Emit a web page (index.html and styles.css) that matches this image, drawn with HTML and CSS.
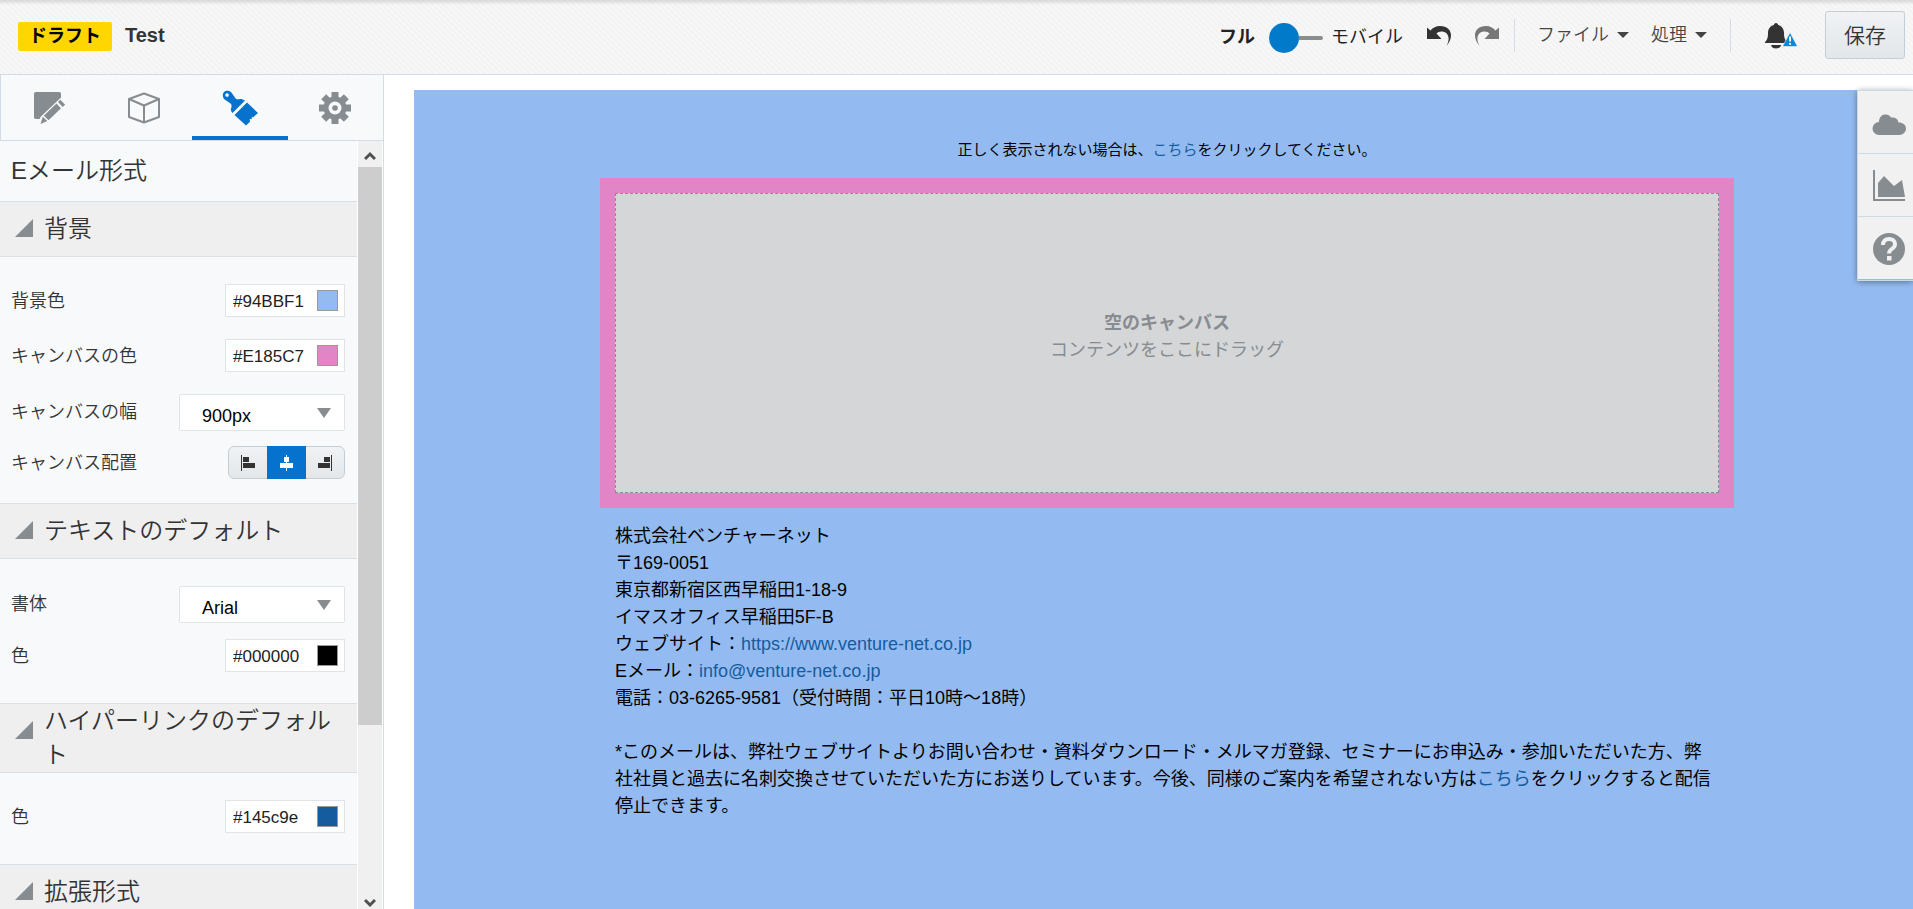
FILE: index.html
```html
<!DOCTYPE html>
<html lang="ja">
<head>
<meta charset="utf-8">
<title>Test</title>
<link rel="stylesheet" href="styles.css">
</head>
<body>
<div class="app">
  <header class="topbar">
    <span class="badge">ドラフト</span>
    <h1 class="doc-title">Test</h1>
    <div class="view-switch">
      <span class="view-full">フル</span>
      <button class="toggle" type="button" role="switch" aria-checked="false" aria-label="表示切替"><span class="knob"></span><span class="track"></span></button>
      <span>モバイル</span>
    </div>
    <div class="history">
      <button class="icon-btn" type="button" aria-label="元に戻す">
        <svg width="26" height="22" viewBox="0 0 26 22"><path fill="#333" d="M1 2.500l3.500 3C7 2.500 10 1 14 1c7 0 11 4 11 9.500 0 4-2 7-4.500 10.500 1.500-3 2.500-6 2-8.500C22 8.500 19 6.500 15.500 6.500c-2 0-4 .8-5 2L15.500 14H1z"/></svg>
      </button>
      <button class="icon-btn" type="button" aria-label="やり直す">
        <svg width="26" height="22" viewBox="0 0 26 22"><path fill="#777" d="M25 2.500l-3.500 3C19 2.500 16 1 12 1 5 1 1 5 1 10.500c0 4 2 7 4.500 10.500-1.500-3-2.500-6-2-8.500C4 8.500 7 6.500 10.500 6.500c2 0 4 .8 5 2L10.500 14H25z"/></svg>
      </button>
    </div>
    <nav class="menus">
      <button class="menu-btn" type="button">ファイル<span class="caret"></span></button>
      <button class="menu-btn" type="button">処理<span class="caret"></span></button>
    </nav>
    <button class="bell" type="button" aria-label="通知">
      <svg width="34" height="28" viewBox="0 0 34 28">
        <path fill="#333" d="M12 1c1.300 0 2 1 2.200 2C18 4 20 7 20 11c0 5 1 7 3 9v1H1v-1c2-2 3-4 3-9 0-4 2-7 5.800-8C10 2 10.700 1 12 1z"/>
        <path fill="#333" d="M7 23h10c-.5 2.500-2.500 3.500-5 3.500S7.500 25.500 7 23z"/>
        <path fill="#0b87d5" stroke="#f5f5f5" stroke-width=".6" d="M26 10.500L33.500 24.500h-15z"/>
        <path fill="#fff" d="M25.200 14.500h1.800v5h-1.800zM25.200 21h1.800v1.800h-1.800z"/>
      </svg>
    </button>
    <button class="save" type="button">保存</button>
  </header>

  <aside class="sidebar">
    <div class="tabs" role="tablist">
      <button class="tab" role="tab" type="button" aria-label="編集">
        <svg width="32" height="34" viewBox="0 0 32 34"><path fill="#878c90" d="M3 1h23c1.500 0 2 .7 2 2v3.500L8 25.500 6.500 28H3c-1.500 0-2-.8-2-2V3c0-1.300.7-2 2-2z"/><path fill="#878c90" d="M23.500 12.500l4.500 4.700-12.500 12-4.700-4.500zM25 11l2.200-2.200 5 4.800-2.500 2.400zM9.800 25.800l4.400 4.200L7.500 33z"/></svg>
      </button>
      <button class="tab" role="tab" type="button" aria-label="コンポーネント">
        <svg width="34" height="32" viewBox="0 0 34 32" fill="none" stroke="#878c90" stroke-width="2" stroke-linejoin="round"><path d="M17 1.500L32 7v18l-15 5.500L2 25V7z"/><path d="M2 7l15 6.500L32 7M17 13.500v17"/></svg>
      </button>
      <button class="tab tab-active" role="tab" type="button" aria-selected="true" aria-label="スタイル">
        <svg width="36" height="36" viewBox="0 0 36 36"><path fill="#0572ce" fill-rule="evenodd" d="M2 2c2-2 5-1.500 7 0l5 7c1.500.8 3.500-.5 5.500 0L23 10.500 10.500 23C8.500 21 8.500 19 9.500 17c.3-1.500 0-2.500-1-3.500L2 9C.5 6.500.3 4 2 2zM5 3.200a1.800 1.800 0 1 0 .1 0z"/><path fill="#0572ce" d="M25 12.500L36 23l-5 4.500-1-1-.3 2.700-2-.5.3 3-4 3.800L12.500 25z"/></svg>
      </button>
      <button class="tab" role="tab" type="button" aria-label="設定">
        <svg width="34" height="34" viewBox="-17 -17 34 34"><g fill="#878c90"><rect x="-3.500" y="-16" width="7" height="32"/><rect x="-3.500" y="-16" width="7" height="32" transform="rotate(45)"/><rect x="-3.500" y="-16" width="7" height="32" transform="rotate(90)"/><rect x="-3.500" y="-16" width="7" height="32" transform="rotate(135)"/><circle r="11.500"/></g><circle r="6.500" fill="#f7f9fb"/><circle r="2.800" fill="#878c90"/></svg>
      </button>
    </div>
    <div class="sidebar-body">
      <div class="panel">
        <h2 class="panel-title">Eメール形式</h2>

        <section class="group">
          <h3 class="group-head"><span class="disclosure"></span><span class="group-name">背景</span></h3>
          <div class="fields">
            <div class="field">
              <label class="field-name" for="bg">背景色</label>
              <span class="color-box"><input id="bg" class="hex" type="text" value="#94BBF1"><button class="swatch swatch-bg" type="button" aria-label="背景色を選択"></button></span>
            </div>
            <div class="field">
              <label class="field-name" for="cv">キャンバスの色</label>
              <span class="color-box"><input id="cv" class="hex" type="text" value="#E185C7"><button class="swatch swatch-canvas" type="button" aria-label="キャンバスの色を選択"></button></span>
            </div>
            <div class="field">
              <label class="select-name" for="cw">キャンバスの幅</label>
              <span class="select-box"><select id="cw" class="select"><option>900px</option></select></span>
            </div>
            <div class="field field-align">
              <span class="field-name" id="al">キャンバス配置</span>
              <span class="segments" role="group" aria-labelledby="al">
                <button class="segment" type="button" aria-label="左揃え"><svg width="16" height="16" viewBox="0 0 16 16" fill="#333"><path d="M1 0h1v16H1zM3 2h6v5H3zM3 8h12v5H3z"/></svg></button>
                <button class="segment segment-on" type="button" aria-label="中央揃え"><svg width="16" height="16" viewBox="0 0 16 16" fill="#fff"><path d="M8 0h1v16H8zM6 2h5v5H6zM2 8h13v5H2z"/></svg></button>
                <button class="segment" type="button" aria-label="右揃え"><svg width="16" height="16" viewBox="0 0 16 16" fill="#333"><path d="M14 0h1v16h-1zM7 2h6v5H7zM1 8h12v5H1z"/></svg></button>
              </span>
            </div>
          </div>
        </section>

        <section class="group">
          <h3 class="group-head"><span class="disclosure"></span><span class="group-name">テキストのデフォルト</span></h3>
          <div class="fields">
            <div class="field">
              <label class="select-name" for="ff">書体</label>
              <span class="select-box"><select id="ff" class="select"><option>Arial</option></select></span>
            </div>
            <div class="field field-near">
              <label class="field-name" for="tc">色</label>
              <span class="color-box"><input id="tc" class="hex" type="text" value="#000000"><button class="swatch swatch-text" type="button" aria-label="文字色を選択"></button></span>
            </div>
          </div>
        </section>

        <section class="group">
          <h3 class="group-head"><span class="disclosure"></span><span class="group-name">ハイパーリンクのデフォルト</span></h3>
          <div class="fields">
            <div class="field">
              <label class="field-name" for="lc">色</label>
              <span class="color-box"><input id="lc" class="hex" type="text" value="#145c9e"><button class="swatch swatch-link" type="button" aria-label="リンク色を選択"></button></span>
            </div>
          </div>
        </section>

        <section class="group">
          <h3 class="group-head"><span class="disclosure"></span><span class="group-name">拡張形式</span></h3>
        </section>
      </div>
      <div class="scrollbar" aria-hidden="true">
        <span class="scroll-end"><svg width="12" height="10" viewBox="0 0 12 10"><path fill="none" stroke="#505050" stroke-width="3" d="M1 8l5-5 5 5"/></svg></span>
        <span class="scroll-track"><span class="scroll-thumb"></span></span>
        <span class="scroll-end scroll-down"><svg width="12" height="10" viewBox="0 0 12 10"><path fill="none" stroke="#505050" stroke-width="3" d="M1 2l5 5 5-5"/></svg></span>
      </div>
    </div>
  </aside>

  <main class="stage">
    <div class="mail">
      <p class="preheader">正しく表示されない場合は、<a href="#">こちら</a>をクリックしてください。</p>
      <div class="canvas">
        <div class="dropzone">
          <strong>空のキャンバス</strong>
          <span>コンテンツをここにドラッグ</span>
        </div>
      </div>
      <div class="footer">
        <p>株式会社ベンチャーネット<br>〒169-0051<br>東京都新宿区西早稲田1‐18‐9<br>イマスオフィス早稲田5F-B<br>ウェブサイト：<a href="#">https://www.venture-net.co.jp</a><br>Eメール：<a href="#">info@venture-net.co.jp</a><br>電話：03-6265-9581（受付時間：平日10時～18時）</p>
        <p>*このメールは、弊社ウェブサイトよりお問い合わせ・資料ダウンロード・メルマガ登録、セミナーにお申込み・参加いただいた方、弊社社員と過去に名刺交換させていただいた方にお送りしています。今後、同様のご案内を希望されない方は<a href="#">こちら</a>をクリックすると配信停止できます。</p>
      </div>
    </div>
    <nav class="dock">
      <button class="dock-btn" type="button" aria-label="クラウド"><svg width="34" height="34" viewBox="0 0 34 34"><path fill="#878c90" d="M7 29a6.500 6.500 0 0 1 0-13C7 11 10 8.500 13.500 8.500c2.500 0 4.500 1 5.500 3 4-.5 7 1.500 7.500 5C31 16.500 34 19 34 22.500S31 29 27.500 29z"/></svg></button>
      <button class="dock-btn" type="button" aria-label="レポート"><svg width="34" height="34" viewBox="0 0 34 34"><path fill="#878c90" d="M1 1h2v29h30v2H1zM6 28V14l6-7 10 10 8-6 3 17z"/></svg></button>
      <button class="dock-btn" type="button" aria-label="ヘルプ"><svg width="34" height="34" viewBox="0 0 34 34"><circle cx="17" cy="17" r="16" fill="#878c90"/><path d="M11 13c0-4 2.500-6 6-6s6 2 6 5.200c0 4.800-6 4.300-6 9.300" fill="none" stroke="#f1f1f1" stroke-width="4"/><rect x="15" y="24" width="4.500" height="4.500" fill="#f1f1f1"/></svg></button>
    </nav>
  </main>
</div>
</body>
</html>
```
FILE: styles.css
```css
* { box-sizing: border-box; }

body {
  margin: 0;
  font-family: "Liberation Sans", "Noto Sans CJK JP", sans-serif;
  font-size: 18px;
  font-weight: 350;
  line-height: 27px;
  color: #333;
  background: #fff;
}

h1, h2, h3, p { margin: 0; font-weight: inherit; }

button {
  font: inherit;
  color: inherit;
  background: none;
  border: 0;
  padding: 0;
}

svg { display: block; }

a { color: #145c9e; text-decoration: none; }

.app {
  display: grid;
  grid-template-columns: 384px minmax(0, 1fr);
  grid-template-rows: 75px minmax(0, 1fr);
  height: 100vh;
  overflow: hidden;
}

/* Top bar */
.topbar {
  grid-column: 1 / -1;
  display: flex;
  align-items: center;
  padding: 0 8px 4px 18px;
  border-bottom: 1px solid #d3dce6;
  background:
    linear-gradient(rgba(0, 0, 0, .12), transparent 5px),
    repeating-linear-gradient(45deg, #f7f7f7 0 2px, #f3f3f3 2px 4px);
}

.badge {
  margin-top: 2px;
  padding: 1px 11px;
  border-radius: 2px;
  background: #ffd600;
  color: #000;
  font-weight: 700;
}

.doc-title { margin-left: 13px; font-size: 20px; font-weight: 700; }

.view-switch {
  display: flex;
  align-items: center;
  margin: 5px 0 0 auto;
  color: #222;
  font-weight: 400;
}

.view-full { font-weight: 700; }

.toggle { display: flex; align-items: center; margin: 0 8px 0 14px; }
.knob { width: 30px; height: 30px; border-radius: 50%; background: #007ac9; }
.track { width: 24px; height: 4px; border-radius: 0 2px 2px 0; background: #888d90; }

.history { display: flex; gap: 22px; padding: 2px 14px 0 23px; }

.menus {
  display: flex;
  align-items: center;
  gap: 22px;
  height: 33px;
  padding: 0 23px 0 22px;
  border: solid #d3dce6;
  border-width: 0 1px;
  color: #444;
}

.menu-btn { display: flex; align-items: center; gap: 8px; }
.caret { border: solid transparent; border-width: 6px 6px 0; border-top-color: #444; }

.bell { padding: 2px 27px 0 33px; }

.save {
  width: 80px;
  height: 48px;
  border: 1px solid #c4ced7;
  border-radius: 3px;
  background: linear-gradient(#f0f2f4, #e3e7ea);
  font-size: 21px;
}

/* Sidebar */
.sidebar {
  display: grid;
  grid-template-rows: 66px minmax(0, 1fr);
  border-right: 1px solid #d3dce6;
  background: #f7f9fb;
}

.tabs {
  display: grid;
  grid-template-columns: repeat(4, 1fr);
  border-bottom: 1px solid #d3dce6;
  border-left: 1px solid #d3dce6;
}

.tab {
  display: flex;
  align-items: center;
  justify-content: center;
  border: solid transparent;
  border-width: 4px 0;
}
.tab-active { border-bottom-color: #0572ce; }

.sidebar-body {
  display: grid;
  grid-template-columns: minmax(0, 1fr) 25px;
  overflow: hidden;
}

.panel { overflow: hidden; border-right: 1px solid #fff; }

.panel-title { padding: 13px 11px; font-size: 24px; line-height: 34px; }

.group-head {
  display: flex;
  align-items: center;
  gap: 11px;
  min-height: 56px;
  padding: 0 12px 0 15px;
  border: solid #d9e0e6;
  border-width: 1px 0;
  background: #efefef;
  font-size: 24px;
  line-height: 34px;
}

.disclosure {
  flex: none;
  align-self: flex-start;
  width: 18px;
  height: 18px;
  margin-top: 17px;
  background: #878c90;
  clip-path: polygon(100% 0, 100% 100%, 0 100%);
}

.fields {
  display: flex;
  flex-direction: column;
  gap: 22px;
  padding: 27px 12px 31px 11px;
}

.field { display: flex; align-items: center; justify-content: space-between; }
.field-name { padding-top: 2px; }
.field-align { margin: -7px 0; }
.field-near { margin-top: -6px; }

.color-box {
  display: flex;
  align-items: center;
  width: 120px;
  height: 33px;
  padding: 0 6px 0 7px;
  border: 1px solid #dfe4e7;
  background: #fff;
}

.hex {
  flex: 1;
  min-width: 0;
  padding: 2px 0 0;
  border: 0;
  background: none;
  font: 17px "Liberation Sans", sans-serif;
  color: #222;
}

.swatch { width: 21px; height: 21px; border: 1px solid #999; }
.swatch-bg { background: #94bbf1; }
.swatch-canvas { background: #e185c7; }
.swatch-text { background: #000; }
.swatch-link { background: #145c9e; }

.select-box {
  display: grid;
  width: 166px;
  height: 37px;
  border: 1px solid #dfe4e7;
  border-radius: 2px;
  background: #fff;
}

.select-box::after {
  content: "";
  grid-area: 1 / 1;
  place-self: center end;
  margin-right: 13px;
  border: solid transparent;
  border-width: 10px 7px 0;
  border-top-color: #878c90;
  pointer-events: none;
}

.select {
  grid-area: 1 / 1;
  appearance: none;
  padding: 6px 22px 0;
  border: 0;
  background: none;
  font: 18px "Liberation Sans", sans-serif;
  color: #000;
}

.segments {
  display: flex;
  width: 117px;
  height: 33px;
  border: 1px solid #c4ced7;
  border-radius: 6px;
  background: linear-gradient(#f0f2f4, #e3e7ea);
}

.segment { display: grid; flex: 1; place-items: center; }
.segment-on { margin: -1px 0; background: #0572ce; }

/* Drawn scrollbar */
.scrollbar {
  display: grid;
  grid-template-rows: 26px minmax(0, 1fr) 26px;
  border-right: 1px solid #fff;
  background: #f0f0f0;
}

.scroll-end { display: grid; place-items: center; padding-top: 4px; }
.scroll-down { align-items: end; padding-bottom: 1px; }
.scroll-thumb { display: block; height: 78%; background: #cdcdcd; }

/* Canvas area */
.stage { position: relative; overflow: hidden; padding: 15px 0 0 30px; }

.mail {
  height: 100%;
  padding: 46px 0 0 7px;
  background: #94bbf1;
  color: #000;
  font-weight: 400;
}

.preheader { font-size: 15px; text-align: center; }

.canvas {
  width: 1134px;
  max-width: 100%;
  margin: 15px auto 0;
  padding: 15px;
  background: #e185c7;
}

.dropzone {
  display: flex;
  flex-direction: column;
  align-items: center;
  justify-content: center;
  height: 300px;
  padding-bottom: 12px;
  border: 1px dashed #878c90;
  background: #d5d6d8;
  color: #878c90;
}

.dropzone strong { font-weight: 700; }

.footer {
  display: grid;
  gap: 27px;
  width: 1134px;
  max-width: 100%;
  margin: 0 auto;
  padding: 15px;
}

/* Tool dock laid over the canvas */
.dock {
  position: absolute;
  top: 15px;
  right: 0;
  width: 56px;
  border: solid #cdd9e3;
  border-width: 1px 0 1px 1px;
  box-shadow: 0 1px 6px rgba(0, 0, 0, .4);
  background: #f1f1f1;
}

.dock-btn {
  display: grid;
  place-items: center;
  width: 100%;
  height: 63px;
  padding: 1px 0 0 7px;
  border-bottom: 1px solid #cdd9e3;
}
.dock-btn:last-child { border-bottom-color: #94bbf1; }
```
